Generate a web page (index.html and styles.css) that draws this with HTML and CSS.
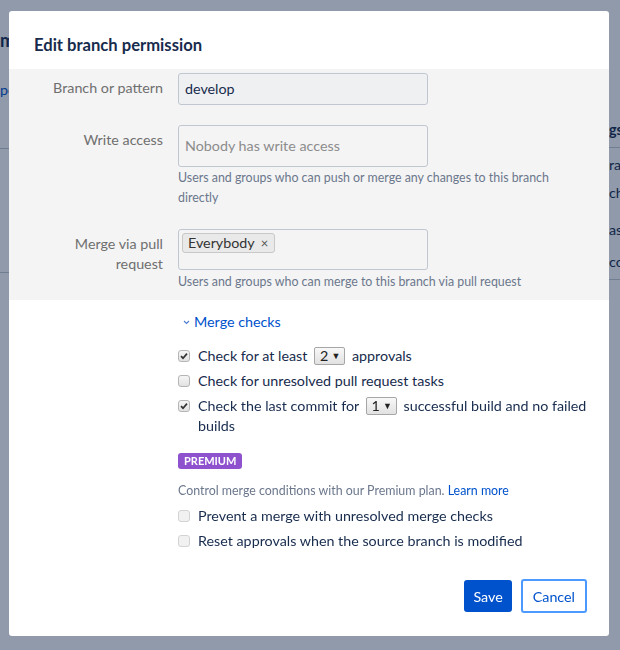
FILE: index.html
```html
<!DOCTYPE html>
<html lang="en">
<head>
    <meta charset="UTF-8">
    <meta name="viewport" content="width=device-width, initial-scale=1.0">
    <title>Edit branch permission</title>
    <link rel="stylesheet" href="styles.css">
</head>
<body>

    <!-- Page behind the dialog, only its edges show -->
    <div class="page">
        <div class="page-side page-left">
            <div class="page-title">missions</div>
            <div class="page-link">pe</div>
            <div class="page-rule rule-top"></div>
            <div class="page-rule rule-bottom"></div>
        </div>
        <div class="page-main"></div>
        <div class="page-side page-right">
            <div class="page-th">gs</div>
            <div class="page-rule rule-head"></div>
            <div class="page-td td-1">ra</div>
            <div class="page-td td-2">ch</div>
            <div class="page-td td-3">as</div>
            <div class="page-td td-4">co</div>
            <div class="page-rule rule-end"></div>
        </div>
    </div>

    <div class="overlay"></div>

    <div class="modal">
        <div class="modal-header">
            <h1>Edit branch permission</h1>
        </div>

        <div class="form-panel">
            <div class="field">
                <label class="field-label">Branch or pattern</label>
                <div class="field-control">
                    <div class="text-input filled">develop</div>
                </div>
            </div>

            <div class="field field-write">
                <label class="field-label">Write access</label>
                <div class="field-control">
                    <div class="text-input tall placeholder">Nobody has write access</div>
                    <div class="help">Users and groups who can push or merge any changes to this branch directly</div>
                </div>
            </div>

            <div class="field field-merge">
                <label class="field-label">Merge via pull request</label>
                <div class="field-control">
                    <div class="text-input tall tags">
                        <span class="tag">Everybody <span class="tag-remove">×</span></span>
                    </div>
                    <div class="help help-merge">Users and groups who can merge to this branch via pull request</div>
                </div>
            </div>
        </div>

        <div class="checks">
            <div class="checks-toggle">
                <svg class="chevron" width="7" height="5" viewBox="0 0 7 5">
                    <path d="M1 1l2.5 2.5L6 1" fill="none" stroke="#4c7bd0" stroke-width="1.1"/>
                </svg>
                Merge checks
            </div>

            <ul class="check-list">
                <li class="check-row">
                    <span class="checkbox checked">
                        <svg width="10" height="10" viewBox="0 0 10 10"><path d="M2 5.2l2 2 4-4.6" fill="none" stroke="#333" stroke-width="1.7"/></svg>
                    </span>
                    <span class="check-text">Check for at least <span class="select">2 <span class="select-arrow">▼</span></span> approvals</span>
                </li>
                <li class="check-row">
                    <span class="checkbox"></span>
                    <span class="check-text">Check for unresolved pull request tasks</span>
                </li>
                <li class="check-row">
                    <span class="checkbox checked">
                        <svg width="10" height="10" viewBox="0 0 10 10"><path d="M2 5.2l2 2 4-4.6" fill="none" stroke="#333" stroke-width="1.7"/></svg>
                    </span>
                    <span class="check-text">Check the last commit for <span class="select">1 <span class="select-arrow">▼</span></span> successful build and no failed builds</span>
                </li>
            </ul>

            <span class="lozenge">PREMIUM</span>

            <p class="premium-note">Control merge conditions with our Premium plan. <a href="#">Learn more</a></p>

            <ul class="check-list premium-list">
                <li class="check-row disabled">
                    <span class="checkbox"></span>
                    <span class="check-text">Prevent a merge with unresolved merge checks</span>
                </li>
                <li class="check-row disabled">
                    <span class="checkbox"></span>
                    <span class="check-text">Reset approvals when the source branch is modified</span>
                </li>
            </ul>
        </div>

        <div class="modal-footer">
            <button class="btn btn-primary">Save</button>
            <button class="btn btn-subtle">Cancel</button>
        </div>
    </div>

</body>
</html>
```

FILE: styles.css
```css
:root {
    --text-color: #172b4d;
    --label-color: #6f6f6f;
    --help-color: #6b778c;
    --link-color: #0052cc;
    --border-color: #c1c7d0;
    --panel-color: #f4f4f4;
}

/* General Body Styles */
body {
    margin: 0;
    width: 620px;
    height: 650px;
    overflow: hidden;
    font-family: 'Lato', 'Noto Sans', sans-serif;
    font-size: 14.3px;
    color: var(--text-color);
    background: #ffffff;
}

/* Page behind the dialog */
.page {
    display: flex;
    height: 650px;
}

.page-main {
    flex: 1;
}

.page-side {
    overflow: hidden;
    white-space: nowrap;
    line-height: 20px;
}

.page-left {
    width: 9px;
}

.page-right {
    width: 11px;
    padding-left: 1px;
}

.page-title {
    margin-top: 30px;
    font-size: 18px;
    font-weight: 700;
}

.page-link {
    margin-top: 30px;
    color: var(--link-color);
}

.page-rule {
    height: 1px;
    background: #c7ccd4;
}

.rule-top { margin-top: 48px; }
.rule-bottom { margin-top: 123px; }

.page-th {
    margin-top: 120px;
    font-weight: 700;
}

.rule-head { margin-top: 7px; }
.td-1 { margin-top: 7px; }
.td-2 { margin-top: 8px; }
.td-3 { margin-top: 17px; }
.td-4 { margin-top: 12px; }
.rule-end { margin-top: 7px; }

.overlay {
    position: fixed;
    inset: 0;
    background: rgba(9, 30, 66, 0.45);
}

/* Dialog */
.modal {
    position: fixed;
    left: 9px;
    top: 11px;
    width: 600px;
    height: 625px;
    background: #ffffff;
    border-radius: 3px;
    display: flex;
    flex-direction: column;
}

.modal-header {
    padding: 24px 25px 14px;
}

h1 {
    margin: 0;
    font-size: 16.6px;
    line-height: 20px;
    font-weight: 700;
    color: var(--text-color);
}

/* Grey form panel */
.form-panel {
    background: var(--panel-color);
    padding: 4px 0 8px;
}

.field {
    display: flex;
    gap: 15px;
}

.field-write { margin-top: 20px; }
.field-merge { margin-top: 21px; }

.field-label {
    width: 154px;
    flex-shrink: 0;
    box-sizing: border-box;
    padding: 5px 0 0 30px;
    line-height: 20px;
    text-align: right;
    color: var(--label-color);
}

.field-control {
    width: 378px;
}

.text-input {
    width: 250px;
    height: 32px;
    box-sizing: border-box;
    border: 1px solid var(--border-color);
    border-radius: 3px;
    padding: 0 6px;
    display: flex;
    align-items: center;
    line-height: 20px;
}

.text-input.filled {
    background: #eff0f2;
}

.text-input.tall {
    height: 42px;
}

.field-merge .text-input.tall {
    height: 41px;
}

.text-input.placeholder {
    color: #8c8c8c;
}

.text-input.tags {
    align-items: flex-start;
    padding: 3px;
}

.tag {
    display: inline-flex;
    align-items: center;
    gap: 6px;
    height: 20px;
    box-sizing: border-box;
    padding: 0 6px 0 5px;
    background: #e9e9e9;
    border: 1px solid #c8c8c8;
    border-radius: 3px;
    color: #333333;
}

.tag-remove {
    color: #555555;
    font-size: 13px;
}

.help {
    margin-top: 1px;
    font-size: 12.4px;
    line-height: 20px;
    color: var(--help-color);
}

.help-merge {
    margin-top: 2px;
}

/* Merge checks */
.checks {
    padding: 12px 14px 0 169px;
}

.checks-toggle {
    display: flex;
    align-items: center;
    gap: 4px;
    padding-left: 5px;
    line-height: 20px;
    color: var(--link-color);
}

.check-list {
    list-style: none;
    margin: 14px 0 0;
    padding: 0;
    display: flex;
    flex-direction: column;
    gap: 5px;
}

.check-row {
    display: flex;
    align-items: flex-start;
    gap: 8px;
    line-height: 20px;
}

.checkbox {
    width: 12px;
    height: 12px;
    margin-top: 4px;
    flex-shrink: 0;
    box-sizing: border-box;
    border: 1px solid #b5b5b5;
    border-radius: 3px;
    background: linear-gradient(#f6f6f6, #e2e2e2);
    display: flex;
    align-items: center;
    justify-content: center;
}

.check-row.disabled .checkbox {
    border-color: #d3d3d3;
    background: #f1f1f1;
}

.select {
    display: inline-flex;
    align-items: center;
    gap: 3px;
    height: 18px;
    box-sizing: border-box;
    padding: 0 4px 0 5px;
    margin: 1px 3px 0;
    vertical-align: top;
    line-height: 16px;
    border: 1px solid #a6a6a6;
    border-radius: 2px;
    background: linear-gradient(#f8f8f8, #e1e1e1);
    color: #222222;
}

.select-arrow {
    font-size: 9px;
}

.lozenge {
    display: inline-block;
    margin-top: 17px;
    height: 16px;
    padding: 0 6px;
    border-radius: 3px;
    background: #8f52cf;
    color: #ffffff;
    font-size: 11px;
    font-weight: 700;
    line-height: 16px;
}

.premium-note {
    margin: 12px 0 0;
    font-size: 12.4px;
    line-height: 20px;
    color: var(--help-color);
}

.premium-note a {
    color: var(--link-color);
    text-decoration: none;
}

.premium-list {
    margin-top: 5px;
}

/* Footer buttons */
.modal-footer {
    margin-top: auto;
    padding: 0 22px 23px;
    display: flex;
    justify-content: flex-end;
    align-items: center;
    gap: 9px;
}

.btn {
    font-family: inherit;
    font-size: 14.3px;
    border-radius: 3px;
    cursor: pointer;
}

.btn-primary {
    height: 32px;
    padding: 0 9px;
    border: none;
    background: #0052cc;
    color: #ffffff;
}

.btn-subtle {
    height: 34px;
    padding: 0 10px;
    border: 2px solid #4c9aff;
    background: #ffffff;
    color: #0052cc;
}
```
